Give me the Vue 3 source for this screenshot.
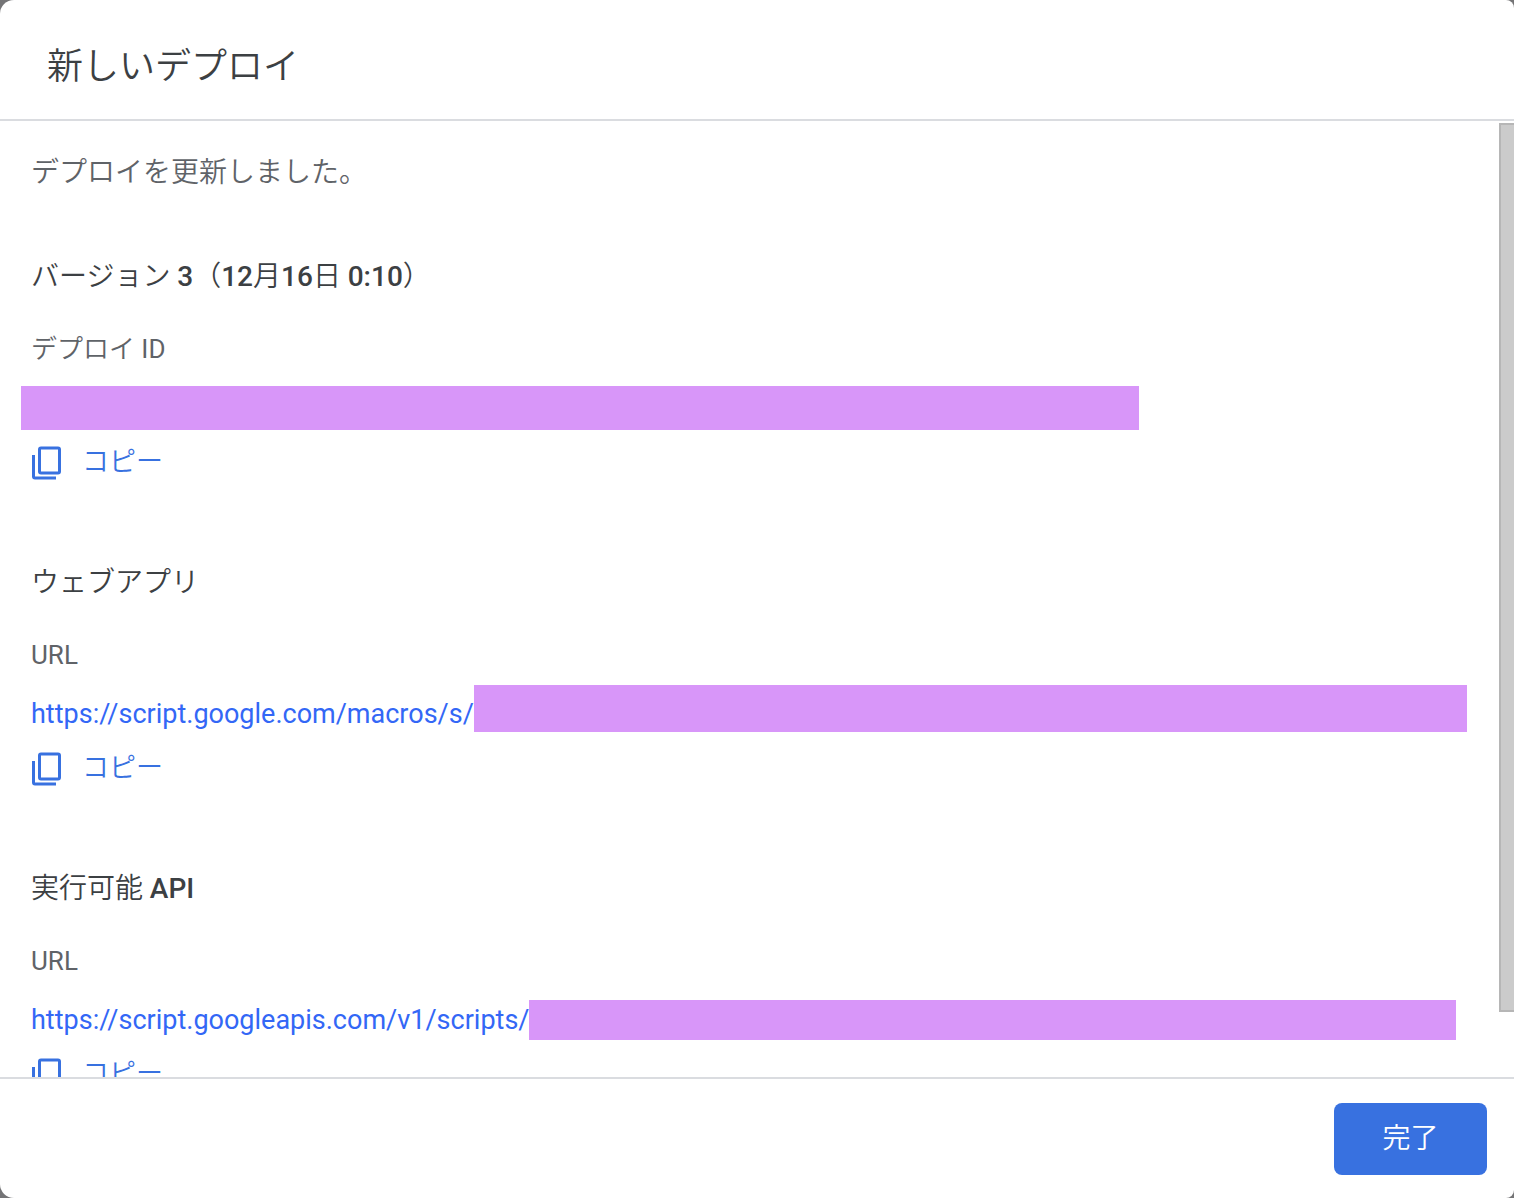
<script setup>
const sections = [
  {
    id: 'deployment',
    heading: [{ text: 'バージョン ' }, { text: '3', latin: true }, { text: '（' }, { text: '12', latin: true }, { text: '月' }, { text: '16', latin: true }, { text: '日 ' }, { text: '0:10', latin: true }, { text: '）' }],
    label: [{ text: 'デプロイ ' }, { text: 'ID', latin: true }],
    link: ''
  },
  {
    id: 'webapp',
    heading: [{ text: 'ウェブアプリ' }],
    label: [{ text: 'URL', latin: true }],
    link: 'https://script.google.com/macros/s/'
  },
  {
    id: 'api',
    heading: [{ text: '実行可能 ' }, { text: 'API', latin: true }],
    label: [{ text: 'URL', latin: true }],
    link: 'https://script.googleapis.com/v1/scripts/'
  }
]
</script>

<template>
  <div class="backdrop">
    <div class="dialog" role="dialog" aria-labelledby="dialog-title">
      <header class="header">
        <h1 id="dialog-title">新しいデプロイ</h1>
      </header>
      <div class="body">
        <main class="content">
          <p class="intro">デプロイを更新しました。</p>
          <section v-for="s in sections" :key="s.id" class="section">
            <h2><span v-for="(part, i) in s.heading" :key="i" :class="{ latin: part.latin }">{{ part.text }}</span></h2>
            <p class="label"><span v-for="(part, i) in s.label" :key="i" :class="{ latin: part.latin }">{{ part.text }}</span></p>
            <div class="value">
              <a v-if="s.link" :href="s.link">{{ s.link }}</a>
              <span class="mask" :class="s.id"></span>
            </div>
            <button type="button" class="copy">
              <svg width="30" height="34" viewBox="0 0 30 34" fill="none" stroke="currentColor" stroke-width="3" aria-hidden="true">
                <rect x="7.5" y="2" width="20" height="25" rx="1.5" />
                <path d="M1.5 9V30.5Q1.5 32 3 32H24" />
              </svg>
              <span class="copy-text">コピー</span>
            </button>
          </section>
        </main>
        <div class="track"><div class="thumb"></div></div>
      </div>
      <footer class="footer">
        <button type="button" class="done">完了</button>
      </footer>
    </div>
  </div>
</template>

<style>
body {
  margin: 0;
}
</style>

<style scoped>
.backdrop {
  height: 100vh;
  background: #747476;
  font-family: Roboto, "Noto Sans CJK JP", sans-serif;
  font-weight: 350;
}
.dialog {
  display: flex;
  flex-direction: column;
  height: 100%;
  background: #fff;
  border-radius: 14px 8px 8px 14px;
  overflow: hidden;
  color: #3c4043;
}
h1, h2, p {
  margin: 0;
  font-weight: inherit;
}
.header {
  padding: 43px 47px 28px;
  border-bottom: 2px solid #dadce0;
}
h1 {
  font-size: 36px;
  line-height: 48px;
}
.body {
  display: flex;
  flex: 1;
  min-height: 0;
}
.content {
  flex: 1;
  min-width: 0;
  padding: 32px 0 0 31px;
  overflow: hidden;
}
.intro {
  margin-bottom: 64px;
  font-size: 28px;
  line-height: 40px;
  color: #5f6368;
}
.section {
  margin-bottom: 80px;
}
h2 {
  margin-bottom: 32px;
  font-size: 28px;
  line-height: 40px;
  white-space: pre-wrap;
}
h2 .latin {
  font-weight: 500;
}
.label {
  margin-bottom: 10px;
  font-size: 26px;
  line-height: 40px;
  color: #5f6368;
  white-space: pre-wrap;
}
.label .latin {
  font-weight: 400;
}
.value {
  display: flex;
  align-items: center;
  height: 58px;
  margin-bottom: 6px;
  font-size: 27px;
}
.value a {
  color: #3367f6;
  font-weight: 400;
  text-decoration: none;
}
.mask {
  flex: 1;
  background: #d896f9;
}
.mask.deployment {
  height: 44px;
  margin: 0 360px 0 -10px;
}
.mask.webapp {
  align-self: flex-start;
  height: 47px;
  margin-right: 32px;
}
.mask.api {
  height: 40px;
  margin-right: 43px;
}
.copy {
  display: flex;
  align-items: center;
  gap: 20px;
  height: 40px;
  padding: 0 0 0 1px;
  border: 0;
  background: none;
  color: #3871e0;
  font: inherit;
  font-size: 27px;
}
.copy-text {
  padding-bottom: 8px;
}
.track {
  width: 15px;
}
.thumb {
  box-sizing: border-box;
  height: 93%;
  margin-top: 2px;
  background: #cbcbcb;
  border: 2px solid #b6b6b6;
  border-right: 0;
}
.footer {
  display: flex;
  justify-content: flex-end;
  padding: 24px 27px 23px;
  border-top: 2px solid #dadce0;
}
.done {
  min-width: 153px;
  height: 72px;
  padding: 0 0 6px;
  border: 0;
  border-radius: 8px;
  background: #3871e0;
  color: #fff;
  font: inherit;
  font-size: 28px;
}
</style>
